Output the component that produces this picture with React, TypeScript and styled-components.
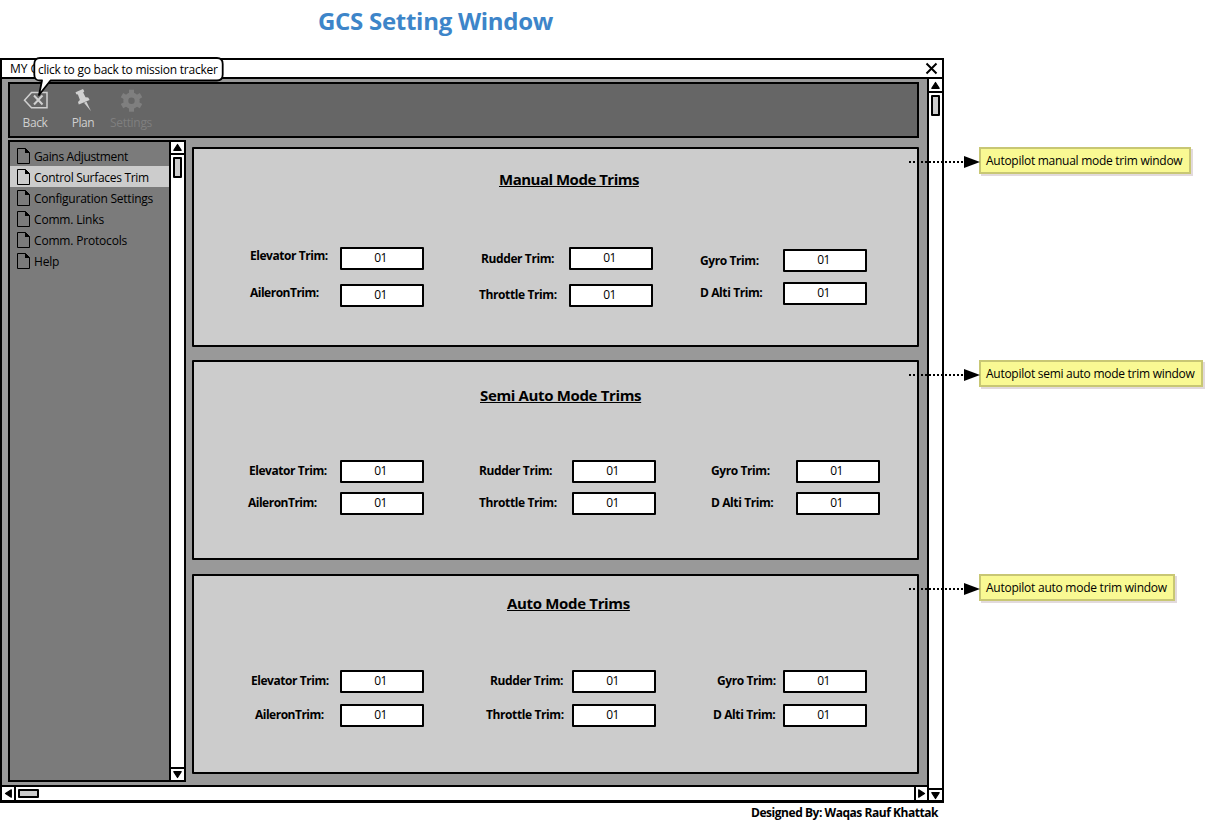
import React from "react";
import styled, { createGlobalStyle } from "styled-components";

const GlobalStyle = createGlobalStyle`
  * { box-sizing: border-box; }
  body { margin: 0; background: #fff; overflow: hidden; }
`;

const Page = styled.div`
  width: 1205px;
  height: 825px;
  display: flex;
  flex-direction: column;
  overflow: hidden;
  color: #000;
  font-family: "Open Sans", "Noto Sans", sans-serif;
  font-size: 12px;
  line-height: 16px;
  white-space: nowrap;
`;

const PageTitle = styled.h1`
  margin: 0 0 0 318px;
  height: 58px;
  padding-top: 5px;
  color: #3d85c9;
  font-size: 24px;
  line-height: 32px;
  font-weight: 700;
  letter-spacing: -0.28px;
`;

const Stage = styled.div`
  display: flex;
  align-items: flex-start;
`;

const Window = styled.main`
  position: relative;
  width: 944px;
  height: 745px;
  display: flex;
  flex-direction: column;
  border: 2px solid #000;
  border-bottom-width: 3px;
  background: #999;
`;

const TitleBar = styled.header`
  display: flex;
  justify-content: space-between;
  height: 19px;
  padding: 0 4px 0 8px;
  border-bottom: 2px solid #000;
  background: #fff;
  span { padding-top: 1px; }
`;

const WindowBody = styled.div`
  flex: 1;
  display: flex;
  min-height: 0;
`;

const Viewport = styled.div`
  width: 925px;
  display: flex;
  flex-direction: column;
`;

const Content = styled.div`
  flex: 1;
  display: flex;
  flex-direction: column;
  gap: 2px;
  padding: 3px 8px 0 6px;
`;

const Toolbar = styled.nav`
  display: flex;
  height: 56px;
  padding-left: 1px;
  border: 2px solid #000;
  background: #666;
`;

const ToolButton = styled.div<{ $disabled?: boolean }>`
  display: flex;
  flex-direction: column;
  align-items: center;
  width: 48px;
  padding-top: 4px;
  color: ${(p) => (p.$disabled ? "#7f7f7f" : "#d0d0d0")};
  letter-spacing: ${(p) => (p.$disabled ? -0.3 : -0.4)}px;
  svg { display: block; margin-bottom: 3px; }
`;

const Columns = styled.div`
  display: flex;
  gap: 6px;
`;

const Sidebar = styled.aside`
  display: flex;
  width: 178px;
  height: 642px;
  border: 2px solid #000;
  background: #7b7b7b;
`;

const NavList = styled.ul`
  flex: 1;
  margin: 0;
  padding: 3px 0 0;
  list-style: none;
`;

const NavItem = styled.li<{ $active?: boolean; $track: number }>`
  display: flex;
  align-items: center;
  gap: 4px;
  height: 21px;
  padding-left: 7px;
  background: ${(p) => (p.$active ? "#ccc" : "transparent")};
  letter-spacing: ${(p) => p.$track}px;
  span { padding-top: 2px; }
`;

const ScrollBar = styled.div<{ $horizontal?: boolean; $wide?: number }>`
  display: flex;
  flex-direction: ${(p) => (p.$horizontal ? "row" : "column")};
  align-items: center;
  ${(p) => (p.$horizontal ? "height: 15px; border-top" : `width: ${p.$wide}px; border-left`)}: 2px solid #000;
  background: #fff;
`;

const ScrollEnd = styled.div<{ $side: "top" | "bottom" | "left" | "right"; $size: number }>`
  display: flex;
  align-items: center;
  justify-content: center;
  flex: none;
  ${(p) => (p.$side === "top" || p.$side === "bottom" ? "width: 100%; height" : "height: 100%; width")}: ${(p) => p.$size}px;
  border-${(p) => p.$side}: 2px solid #000;
`;

const Thumb = styled.div<{ $horizontal?: boolean }>`
  flex: none;
  width: ${(p) => (p.$horizontal ? 21 : 9)}px;
  height: ${(p) => (p.$horizontal ? 9 : 21)}px;
  margin: ${(p) => (p.$horizontal ? "0 auto 0 2px" : "2px 0 auto")};
  border: 2px solid #000;
  border-radius: 1px;
  background: #ccc;
`;

const Panels = styled.div`
  display: flex;
  flex-direction: column;
  gap: 13px;
  width: 727px;
  padding-top: 7px;
`;

const Panel = styled.section<{ $after?: number }>`
  display: flex;
  flex-direction: column;
  height: 200px;
  margin-bottom: ${(p) => p.$after ?? 0}px;
  border: 2px solid #000;
  border-radius: 1px;
  background: #ccc;
`;

const PanelTitle = styled.h2<{ $top: number; $left: number; $track: number }>`
  align-self: flex-start;
  margin: ${(p) => p.$top}px 0 0 ${(p) => p.$left}px;
  font-size: 15px;
  line-height: 20px;
  font-weight: 700;
  letter-spacing: ${(p) => p.$track}px;
  text-decoration: underline;
  text-decoration-thickness: 1px;
  text-decoration-skip-ink: none;
  text-underline-offset: 1px;
`;

const FieldColumns = styled.div<{ $top: number }>`
  display: flex;
  align-items: flex-start;
  margin-top: ${(p) => p.$top}px;
  padding-left: 52px;
`;

const FieldColumn = styled.div<{ $before: number; $top: number; $gap: number }>`
  display: flex;
  flex-direction: column;
  gap: ${(p) => p.$gap}px;
  margin: ${(p) => p.$top}px 0 0 ${(p) => p.$before}px;
`;

const Field = styled.label<{ $labelWidth: number }>`
  display: grid;
  grid-template-columns: ${(p) => p.$labelWidth}px 84px;
  height: 23px;
`;

const FieldName = styled.span<{ $indent: number; $top: number; $track: number }>`
  padding: ${(p) => p.$top}px 0 0 ${(p) => p.$indent}px;
  font-weight: 700;
  letter-spacing: ${(p) => p.$track}px;
`;

const FieldValue = styled.span`
  display: flex;
  justify-content: center;
  padding: 1px 3px 0 0;
  border: 2px solid #000;
  border-radius: 1px;
  background: #fff;
  letter-spacing: -0.7px;
`;

const Notes = styled.div`
  display: flex;
  flex-direction: column;
  align-items: flex-start;
  gap: 186px;
  padding: 89px 0 0 35px;
`;

const Note = styled.div<{ $width: number; $after?: number; $track: number }>`
  position: relative;
  width: ${(p) => p.$width}px;
  height: 27px;
  margin-bottom: ${(p) => p.$after ?? 0}px;
  padding: 4px 0 0 5px;
  border: 2px solid #c8c774;
  background: #f9f993;
  box-shadow: 2px 2px 0 #e2dadc;
  letter-spacing: ${(p) => p.$track}px;
`;

const Connector = styled.svg`
  position: absolute;
  left: -72px;
  top: 6px;
`;

const Tooltip = styled.div`
  position: absolute;
  left: 31px;
  top: -3px;
  width: 192px;
  height: 46px;
  padding: 5px 0 0 5px;
  svg { position: absolute; left: 0; top: 0; }
  span { position: relative; letter-spacing: -0.24px; }
`;

const Credit = styled.footer`
  margin: 2px 0 0 751px;
  font-weight: 700;
  letter-spacing: -0.46px;
`;

type Direction = "up" | "down" | "left" | "right";
const turns: Record<Direction, number> = { up: 0, right: 90, down: 180, left: 270 };

const Arrow = ({ to }: { to: Direction }) => (
  <svg width="9" height="9" viewBox="0 0 9 9">
    <path d="M4.5 1.5 8.2 7.3H.8Z" stroke="#000" strokeWidth="1.2" strokeLinejoin="round" transform={`rotate(${turns[to]} 4.5 4.5)`} />
  </svg>
);

const PageIcon = () => (
  <svg width="13" height="16" viewBox="0 0 13 16">
    <path d="M.5.5H8.5L12.5 4.5V15.5H.5Z" fill="none" stroke="#000" />
    <path d="M8 0 13 5H8Z" />
  </svg>
);

const BackIcon = () => (
  <svg width="26" height="24" viewBox="0 0 26 24">
    <path d="M9.500 4.500H25V19.800H9.500L2.500 12.200Z" fill="none" stroke="currentColor" strokeWidth="1.500" />
    <path d="M12 7.500 20.500 16.500M20.500 7.500 12 16.500" stroke="currentColor" strokeWidth="2" />
  </svg>
);

const PinIcon = () => (
  <svg width="26" height="24" viewBox="0 0 26 24" fill="currentColor">
    <path d="M5.500 4.200 13 1 14.300 3.200 13.200 4.600 15.500 9.200 18.200 9.600 19.600 12 8.800 16.400 8 14 9.900 12 7.900 6.500 6.300 6.300Z" />
    <path d="M14 14.800 16.500 13.800 21 23.300Z" />
  </svg>
);

const GearIcon = () => (
  <svg width="26" height="24" viewBox="0 0 26 24" fill="none" stroke="currentColor">
    <circle cx="13.500" cy="12.700" r="5.700" strokeWidth="5" />
    {[0, 60, 120, 180, 240, 300].map((angle) => (
      <path key={angle} d="M13.500 1.700V7" strokeWidth="5" transform={`rotate(${angle} 13.500 12.700)`} />
    ))}
  </svg>
);

const VerticalScroll = ({ wide, top, bottom }: { wide: number; top: number; bottom: number }) => (
  <ScrollBar $wide={wide}>
    <ScrollEnd $side="bottom" $size={top}><Arrow to="up" /></ScrollEnd>
    <Thumb />
    <ScrollEnd $side="top" $size={bottom}><Arrow to="down" /></ScrollEnd>
  </ScrollBar>
);

const navItems = [
  { text: "Gains Adjustment", track: -0.35 },
  { text: "Control Surfaces Trim", track: -0.3, active: true },
  { text: "Configuration Settings", track: -0.23 },
  { text: "Comm. Links", track: -0.18 },
  { text: "Comm. Protocols", track: -0.18 },
  { text: "Help", track: -0.2 },
];

type FieldSpec = { name: string; indent: number; top: number; track: number };
type ColumnSpec = { before: number; top: number; gap: number; labelWidth: number; fields: FieldSpec[] };
type PanelSpec = {
  title: string; titleTop: number; titleLeft: number; titleTrack: number;
  fieldsTop: number; after?: number; columns: ColumnSpec[];
};

const f = (name: string, indent: number, top: number, track = -0.4): FieldSpec => ({ name, indent, top, track });

const panels: PanelSpec[] = [
  {
    title: "Manual Mode Trims", titleTop: 20, titleLeft: 305, titleTrack: -0.5, fieldsTop: 58,
    columns: [
      { before: 0, top: 0, gap: 14, labelWidth: 94, fields: [f("Elevator Trim:", 4, 1, -0.45), f("AileronTrim:", 4, 1, -0.5)] },
      { before: 52, top: 0, gap: 14, labelWidth: 93, fields: [f("Rudder Trim:", 5, 4), f("Throttle Trim:", 3, 3)] },
      { before: 44, top: 2, gap: 10, labelWidth: 86, fields: [f("Gyro Trim:", 3, 4), f("D Alti Trim:", 3, 3)] },
    ],
  },
  {
    title: "Semi Auto Mode Trims", titleTop: 23, titleLeft: 286, titleTrack: -0.35, fieldsTop: 55, after: 1,
    columns: [
      { before: 0, top: 0, gap: 9, labelWidth: 94, fields: [f("Elevator Trim:", 3, 3, -0.45), f("AileronTrim:", 2, 3, -0.5)] },
      { before: 52, top: 0, gap: 9, labelWidth: 96, fields: [f("Rudder Trim:", 3, 3), f("Throttle Trim:", 3, 3)] },
      { before: 41, top: 0, gap: 9, labelWidth: 99, fields: [f("Gyro Trim:", 14, 3), f("D Alti Trim:", 14, 3)] },
    ],
  },
  {
    title: "Auto Mode Trims", titleTop: 17, titleLeft: 313, titleTrack: -0.33, fieldsTop: 57,
    columns: [
      { before: 0, top: 0, gap: 11, labelWidth: 94, fields: [f("Elevator Trim:", 5, 3, -0.45), f("AileronTrim:", 9, 3, -0.5)] },
      { before: 52, top: 0, gap: 11, labelWidth: 96, fields: [f("Rudder Trim:", 14, 3), f("Throttle Trim:", 10, 3)] },
      { before: 41, top: 0, gap: 11, labelWidth: 86, fields: [f("Gyro Trim:", 20, 3), f("D Alti Trim:", 16, 3)] },
    ],
  },
];

const notes = [
  { text: "Autopilot manual mode trim window", width: 212, track: -0.27 },
  { text: "Autopilot semi auto mode trim window", width: 224, track: -0.27, after: 1 },
  { text: "Autopilot auto mode trim window", width: 196, track: -0.25 },
];

export default function App() {
  return (
    <Page>
      <GlobalStyle />
      <PageTitle>GCS Setting Window</PageTitle>
      <Stage>
        <Window>
          <TitleBar>
            <span>MY GCS</span>
            <svg width="13" height="17" viewBox="0 0 13 17">
              <path d="M1.5 3.5 11.5 13.5M11.5 3.5 1.5 13.5" stroke="#000" strokeWidth="2" />
            </svg>
          </TitleBar>
          <WindowBody>
            <Viewport>
              <Content>
                <Toolbar>
                  <ToolButton><BackIcon />Back</ToolButton>
                  <ToolButton><PinIcon />Plan</ToolButton>
                  <ToolButton $disabled><GearIcon />Settings</ToolButton>
                </Toolbar>
                <Columns>
                  <Sidebar>
                    <NavList>
                      {navItems.map((item) => (
                        <NavItem key={item.text} $active={item.active} $track={item.track}>
                          <PageIcon /><span>{item.text}</span>
                        </NavItem>
                      ))}
                    </NavList>
                    <VerticalScroll wide={15} top={13} bottom={13} />
                  </Sidebar>
                  <Panels>
                    {panels.map((panel) => (
                      <Panel key={panel.title} $after={panel.after}>
                        <PanelTitle $top={panel.titleTop} $left={panel.titleLeft} $track={panel.titleTrack}>{panel.title}</PanelTitle>
                        <FieldColumns $top={panel.fieldsTop}>
                          {panel.columns.map((column, i) => (
                            <FieldColumn key={i} $before={column.before} $top={column.top} $gap={column.gap}>
                              {column.fields.map((field) => (
                                <Field key={field.name} $labelWidth={column.labelWidth}>
                                  <FieldName $indent={field.indent} $top={field.top} $track={field.track}>{field.name}</FieldName>
                                  <FieldValue>01</FieldValue>
                                </Field>
                              ))}
                            </FieldColumn>
                          ))}
                        </FieldColumns>
                      </Panel>
                    ))}
                  </Panels>
                </Columns>
              </Content>
              <ScrollBar $horizontal>
                <ScrollEnd $side="right" $size={14}><Arrow to="left" /></ScrollEnd>
                <Thumb $horizontal />
                <ScrollEnd $side="left" $size={13}><Arrow to="right" /></ScrollEnd>
              </ScrollBar>
            </Viewport>
            <VerticalScroll wide={15} top={14} bottom={12} />
          </WindowBody>
          <Tooltip>
            <svg width="192" height="46" viewBox="0 0 192 46">
              <path d="M7 1H184Q189.700 1 189.700 7V17.500Q189.700 23.500 184 23.500H17.500L6 38 9 23.500H7Q1.300 23.500 1.300 17.500V7Q1.300 1 7 1Z" fill="#fff" stroke="#000" strokeWidth="1.800" strokeLinejoin="round" />
            </svg>
            <span>click to go back to mission tracker</span>
          </Tooltip>
        </Window>
        <Notes>
          {notes.map((note) => (
            <Note key={note.text} $width={note.width} $after={note.after} $track={note.track}>
              <Connector width="72" height="14" viewBox="0 0 72 14">
                <path d="M0 7H56" stroke="#000" strokeWidth="2" strokeDasharray="2 2" />
                <path d="M55 1 71 7 55 13Z" />
              </Connector>
              {note.text}
            </Note>
          ))}
        </Notes>
      </Stage>
      <Credit>Designed By: Waqas Rauf Khattak</Credit>
    </Page>
  );
}
